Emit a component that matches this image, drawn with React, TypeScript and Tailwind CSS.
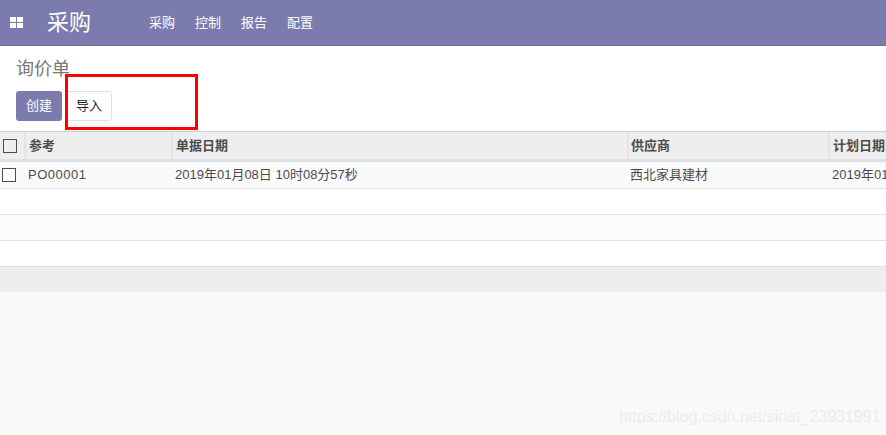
const font = "[font-family:'Liberation_Sans','Noto_Sans_CJK_SC',sans-serif]"

const menus = ["采购", "控制", "报告", "配置"]

function Box({ className }: { className: string }) {
  return <span className={"block h-[14px] w-[14px] border border-[#4c4c4c] bg-white " + className} />
}

function AppsIcon() {
  return (
    <svg width="13" height="11" viewBox="0 0 13 11" fill="#fff">
      <rect x="0" y="0" width="6" height="5" />
      <rect x="7" y="0" width="6" height="5" />
      <rect x="0" y="6" width="6" height="5" />
      <rect x="7" y="6" width="6" height="5" />
    </svg>
  )
}

const cols = "grid grid-cols-[26px_147px_456px_201px_1fr]"

export default function App() {
  return (
    <div className={"relative flex h-[435px] w-[886px] flex-col overflow-hidden bg-[#f9f9f9] text-[13px] text-[#4c4c4c] " + font}>
      {/* top bar */}
      <nav className="flex h-[46px] shrink-0 items-center border-b border-[#6f6a9c] bg-[#7c7bad] text-white">
        <div className="ml-[10px] flex w-[37px] shrink-0"><AppsIcon /></div>
        <div className="w-[102px] shrink-0 pt-[1px] text-[22px] leading-[30px]">采购</div>
        <div className="flex gap-[20px]">
          {menus.map((m) => (
            <span key={m} className="leading-[20px]">{m}</span>
          ))}
        </div>
      </nav>

      {/* control panel */}
      <div className="h-[85px] shrink-0 bg-white pl-[16px]">
        <div className="pt-[11px] text-[18px] leading-[25px] text-[#777777]">询价单</div>
        <div className="mt-[9px] flex gap-[4px]">
          <button className="h-[30px] w-[46px] rounded-[3px] bg-[#7c7bad] text-white">创建</button>
          <button className="h-[30px] w-[46px] rounded-[3px] border border-[#dee2e6] bg-white text-[#212529]">导入</button>
        </div>
      </div>

      {/* list */}
      <div className="shrink-0 border-t border-[#cccccc]">
        <div className={cols + " h-[30px] border-b-[3px] border-[#dee2e6] bg-[#eeeeee] font-bold"}>
          <div className="flex items-center border-r-2 border-[#e4e4e4] pl-[3px]"><Box className="!bg-transparent" /></div>
          <div className="flex items-center border-r-2 border-[#e4e4e4] pl-[3px]">参考</div>
          <div className="flex items-center border-r-2 border-[#e4e4e4] pl-[3px]">单据日期</div>
          <div className="flex items-center border-r-2 border-[#e4e4e4] pl-[2px]">供应商</div>
          <div className="flex items-center overflow-hidden whitespace-nowrap pl-[3px]">计划日期</div>
        </div>
        <div className={cols + " h-[27px] border-b border-[#e2e2e2] bg-[#fafafa]"}>
          <div className="flex items-center pl-[2px]"><Box className="" /></div>
          <div className="flex items-center pl-[2px] tracking-[0.5px]">PO00001</div>
          <div className="flex items-center pl-[2px] whitespace-nowrap">2019年01月08日 10时08分57秒</div>
          <div className="flex items-center pl-[1px]">西北家具建材</div>
          <div className="flex items-center overflow-hidden whitespace-nowrap pl-[2px]">2019年01月08日</div>
        </div>
        <div className="h-[26px] border-b border-[#e2e2e2] bg-white" />
        <div className="h-[26px] border-b border-[#e2e2e2] bg-[#fcfcfc]" />
        <div className="h-[26px] border-b border-[#e2e2e2] bg-white" />
        <div className="h-[25px] bg-[#eeeeee]" />
      </div>

      {/* annotation over the screenshot */}
      <div className="absolute left-[65px] top-[74px] h-[56px] w-[133px] border-[3px] border-[#ff0000]" />
      <div className="absolute left-[619px] top-[407px] text-[16px] leading-[20px] text-[#ececec]">https://blog.csdn.net/sinat_23931991</div>
    </div>
  )
}
